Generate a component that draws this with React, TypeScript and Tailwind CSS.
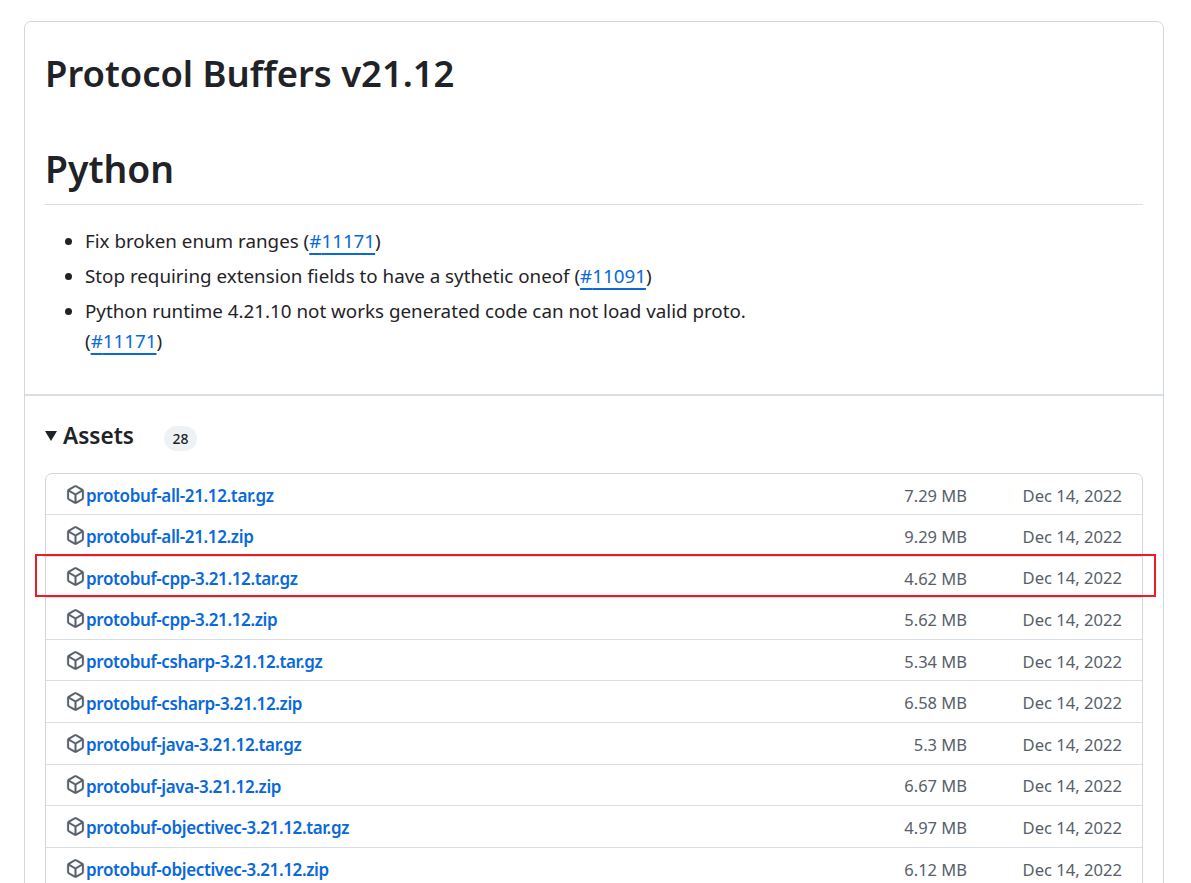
const assets = [
  ["protobuf-all-21.12.tar.gz", "7.29 MB"],
  ["protobuf-all-21.12.zip", "9.29 MB"],
  ["protobuf-cpp-3.21.12.tar.gz", "4.62 MB"],
  ["protobuf-cpp-3.21.12.zip", "5.62 MB"],
  ["protobuf-csharp-3.21.12.tar.gz", "5.34 MB"],
  ["protobuf-csharp-3.21.12.zip", "6.58 MB"],
  ["protobuf-java-3.21.12.tar.gz", "5.3 MB"],
  ["protobuf-java-3.21.12.zip", "6.67 MB"],
  ["protobuf-objectivec-3.21.12.tar.gz", "4.97 MB"],
  ["protobuf-objectivec-3.21.12.zip", "6.12 MB"],
];

function PackageIcon() {
  return (
    <svg viewBox="0 0 16 16" className="size-[19px] shrink-0 -translate-y-[2px] text-[#57606a]" fill="currentColor" stroke="currentColor" strokeWidth="0.2">
      <path d="m8.878.392 5.25 3.045c.54.314.872.89.872 1.514v6.098a1.75 1.75 0 0 1-.872 1.514l-5.25 3.045a1.75 1.75 0 0 1-1.756 0l-5.25-3.045A1.75 1.75 0 0 1 1 11.049V4.951c0-.624.332-1.201.872-1.514L7.122.392a1.75 1.75 0 0 1 1.756 0ZM7.875 1.69l-4.63 2.685L8 7.133l4.755-2.758-4.63-2.685a.248.248 0 0 0-.25 0ZM2.5 5.677v5.372c0 .09.047.171.125.216l4.625 2.683V8.432Zm6.25 8.271 4.625-2.683a.25.25 0 0 0 .125-.216V5.677L8.75 8.432Z" />
    </svg>
  );
}

function IssueLink({ num }: { num: string }) {
  return (
    <a className="text-[#0969da] underline decoration-2 underline-offset-[5px]">#{num}</a>
  );
}

export default function App() {
  return (
    <div className="relative h-[883px] overflow-hidden bg-white font-['Noto_Sans','Open_Sans',sans-serif] text-[#1f2328]">
      <div className="ml-[24px] mr-[27px] mt-[21px] h-[900px] rounded-t-[7px] border border-[#d0d7de]">
        <div className="h-[372px] px-[20px]">
          <h1 className="pt-[25px] text-[36.4px] font-semibold leading-[52px]">Protocol Buffers v21.12</h1>
          <h2 className="mt-[44px] border-b border-[#d8dee4] pb-[9px] text-[37.3px] font-semibold leading-[52px]">Python</h2>
          <ul className="mt-[21px] list-disc pl-[40px] text-[18.8px] leading-[30px]">
            <li className="mb-[5px]">Fix broken enum ranges (<IssueLink num="11171" />)</li>
            <li className="mb-[5px]">Stop requiring extension fields to have a sythetic oneof (<IssueLink num="11091" />)</li>
            <li>Python runtime 4.21.10 not works generated code can not load valid proto.<br />(<IssueLink num="11171" />)</li>
          </ul>
        </div>
        <div className="border-t-2 border-[#d8dee4] px-[20px]">
          <div className="mt-[23px] flex h-[34px] items-center">
            <span className="h-0 w-0 border-x-[6px] border-t-[10px] border-x-transparent border-t-[#1f2328]" />
            <span className="ml-[6px] text-[22.6px] font-semibold leading-[34px]">Assets</span>
            <span className="ml-[30px] mt-[4px] flex h-[25px] w-[33px] items-center justify-center rounded-full bg-[#eff2f5] text-[14px] font-medium">28</span>
          </div>
          <div className="mt-[20px] rounded-t-[7px] border border-[#d0d7de]">
            {assets.map(([name, size], i) => (
              <div key={name} className={`flex items-center pl-[20px] pr-[20px] pt-[4px] ${i > 0 ? "h-[41.6px] border-t border-[#d8dee4]" : "h-[40px]"}`}>
                <PackageIcon />
                <a className="ml-[1px] grow text-[17px] font-semibold leading-[28px] tracking-[-0.38px] text-[#0969da]">{name}</a>
                <span className="w-[120px] text-right text-[16.5px] text-[#57606a]">{size}</span>
                <span className="w-[155px] text-right text-[16.6px] text-[#57606a]">Dec 14, 2022</span>
              </div>
            ))}
          </div>
        </div>
      </div>
      <div className="absolute left-[35px] top-[554px] h-[43px] w-[1121px] border-2 border-[#ed1c24]" />
    </div>
  );
}
